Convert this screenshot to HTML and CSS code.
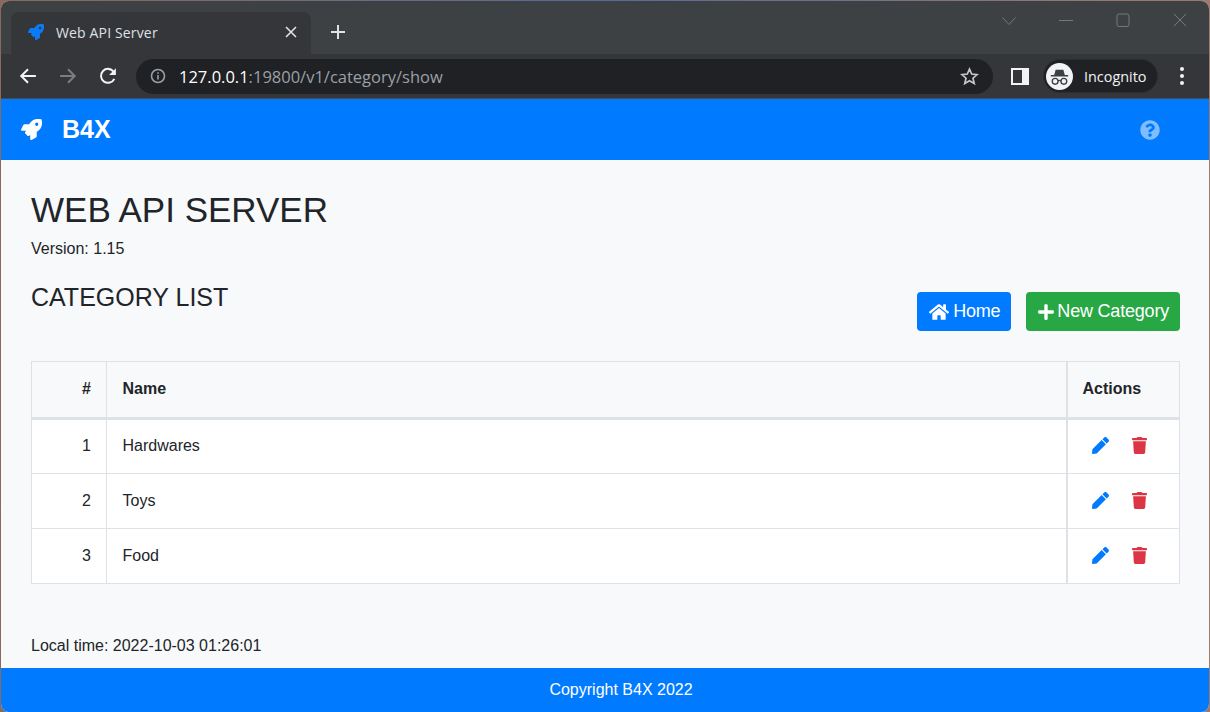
FILE: index.html
```html
<!DOCTYPE html>
<html>
	<head>
		<meta charset="utf-8">
		<title>Web API Server</title>
		<link rel="stylesheet" href="styles.css">
	</head>
	<body>
		<div class="window">
			<div class="tabstrip">
				<div class="tab">
					<svg class="tab-icon" viewBox="0 0 512 512"><path d="M505.12 19.09c-1.19-5.53-6.66-11-12.21-12.19C460.72 0 435.51 0 410.41 0 307.18 0 245.27 55.2 199.05 128H94.84c-16.35.02-35.56 11.88-42.89 26.48L2.52 253.3A28.4 28.4 0 0 0 0 264a24 24 0 0 0 24 24h103.81l-22.47 22.47c-11.37 11.36-13 32.26 0 45.25l50.9 50.91c11.16 11.19 32.16 13.16 45.28 0l22.47-22.47V488a24 24 0 0 0 24 24 28.56 28.56 0 0 0 10.71-2.52l98.73-49.39c14.63-7.3 26.51-26.5 26.51-42.86V312.8c72.6-46.31 128.03-108.41 128.03-211.1.02-25.2.02-50.4-6.93-82.61zM384.04 168a40 40 0 1 1 40.01-40 40 40 0 0 1-40.01 40z"/></svg>
					<span class="tab-title">Web API Server</span>
					<svg class="tab-close" viewBox="0 0 12 12"><path d="M1 1l10 10M11 1L1 11"/></svg>
				</div>
				<svg class="new-tab" viewBox="0 0 16 16"><path d="M8 1v14M1 8h14"/></svg>
				<div class="win-btns">
					<svg viewBox="0 0 14 14"><path d="M.5 4.500l6.500 7 6.500-7"/></svg>
					<svg viewBox="0 0 14 14"><path d="M0 7.500h14"/></svg>
					<svg viewBox="0 0 14 14"><rect x="1" y="1" width="12" height="12.500" rx="2"/></svg>
					<svg viewBox="0 0 14 14"><path d="M1 1l12 12M13 1L1 13"/></svg>
				</div>
			</div>
			<div class="toolbar">
				<svg class="tool-icon" viewBox="0 0 16 16"><path d="M15 8H2M8 2L2 8l6 6"/></svg>
				<svg class="tool-icon dim" viewBox="0 0 16 16"><path d="M1 8h13M8 2l6 6-6 6"/></svg>
				<svg class="tool-icon reload" viewBox="0 0 16 16"><path d="M13.6 10.5A6.2 6.2 0 1 1 13 4.2"/><path class="fill" d="M15 1v6H9z"/></svg>
				<div class="omnibox">
					<svg class="info" viewBox="0 0 16 16"><circle cx="8" cy="8" r="6.5"/><path d="M8 7v4.5M8 4.2v1.6"/></svg>
					<span class="url"><b>127.0.0.1</b>:19800/v1/category/show</span>
					<svg class="star" viewBox="0 0 18 18"><path d="M9 2l2.1 4.7 5.1.5-3.9 3.4 1.2 5L9 13l-4.5 2.6 1.2-5-3.9-3.4 5.1-.5z"/></svg>
				</div>
				<svg class="side-panel" viewBox="0 0 18 17"><path fill-rule="evenodd" d="M0 0h18v17H0zM2 2v13h9V2z"/></svg>
				<div class="profile">
					<span class="avatar">
						<svg viewBox="0 0 28 28"><path class="hat" d="M10 7h8l1.5 5.5H23V14H5v-1.5h3.500z"/><circle cx="9.500" cy="19" r="3"/><circle cx="18.500" cy="19" r="3"/><path d="M12.500 18.500c1-.7 2-.7 3 0"/></svg>
					</span>
					<span class="profile-name">Incognito</span>
				</div>
				<div class="dots"><i></i><i></i><i></i></div>
			</div>
			<nav class="navbar">
				<svg class="brand-icon" viewBox="0 0 512 512"><path d="M505.12 19.09c-1.19-5.53-6.66-11-12.21-12.19C460.72 0 435.51 0 410.41 0 307.18 0 245.27 55.2 199.05 128H94.84c-16.35.02-35.56 11.88-42.89 26.48L2.52 253.3A28.4 28.4 0 0 0 0 264a24 24 0 0 0 24 24h103.81l-22.47 22.47c-11.37 11.36-13 32.26 0 45.25l50.9 50.91c11.16 11.19 32.16 13.16 45.28 0l22.47-22.47V488a24 24 0 0 0 24 24 28.56 28.56 0 0 0 10.71-2.52l98.73-49.39c14.63-7.3 26.51-26.5 26.51-42.86V312.8c72.6-46.31 128.03-108.41 128.03-211.1.02-25.2.02-50.4-6.93-82.61zM384.04 168a40 40 0 1 1 40.01-40 40 40 0 0 1-40.01 40z"/></svg>
				<span class="brand">B4X</span>
				<svg class="help" viewBox="0 0 512 512"><path d="M504 256c0 136.997-111.043 248-248 248S8 392.997 8 256C8 119.083 119.043 8 256 8s248 111.083 248 248zM262.655 90c-54.497 0-89.255 22.957-116.549 63.758-3.536 5.286-2.353 12.415 2.715 16.258l34.699 26.31c5.205 3.947 12.621 3.008 16.665-2.122 17.864-22.658 30.113-35.797 57.303-35.797 20.429 0 45.698 13.148 45.698 32.958 0 14.976-12.363 22.667-32.534 33.976C247.128 238.528 216 254.941 216 296v4c0 6.627 5.373 12 12 12h56c6.627 0 12-5.373 12-12v-1.333c0-28.462 83.186-29.647 83.186-106.667 0-58.002-60.165-102-116.531-102zM256 338c-25.365 0-46 20.635-46 46 0 25.364 20.635 46 46 46s46-20.636 46-46c0-25.365-20.635-46-46-46z"/></svg>
			</nav>
			<main class="content">
				<h1>WEB API SERVER</h1>
				<p class="version">Version: 1.15</p>
				<div class="list-head">
					<h2>CATEGORY LIST</h2>
					<div class="actions">
						<a class="btn btn-blue">
							<svg class="btn-home" viewBox="0 0 576 512"><path d="M280.37 148.26L96 300.11V464a16 16 0 0 0 16 16l112.06-.29a16 16 0 0 0 15.92-16V368a16 16 0 0 1 16-16h64a16 16 0 0 1 16 16v95.64a16 16 0 0 0 16 16.05L464 480a16 16 0 0 0 16-16V300L295.67 148.26a12.19 12.19 0 0 0-15.3 0zM571.6 251.47L488 182.56V44.05a12 12 0 0 0-12-12h-56a12 12 0 0 0-12 12v72.61L318.47 43a48 48 0 0 0-61 0L4.34 251.47a12 12 0 0 0-1.6 16.9l25.5 31A12 12 0 0 0 45.15 301l235.22-193.74a12.19 12.19 0 0 1 15.3 0L530.9 301a12 12 0 0 0 16.9-1.6l25.5-31a12 12 0 0 0-1.7-16.93z"/></svg>
							Home
						</a>
						<a class="btn btn-green">
							<svg class="btn-plus" viewBox="0 0 448 512"><path d="M416 208H272V64c0-17.67-14.33-32-32-32h-32c-17.67 0-32 14.33-32 32v144H32c-17.67 0-32 14.33-32 32v32c0 17.67 14.33 32 32 32h144v144c0 17.67 14.33 32 32 32h32c17.67 0 32-14.33 32-32V304h144c17.67 0 32-14.33 32-32v-32c0-17.67-14.33-32-32-32z"/></svg>
							New Category
						</a>
					</div>
				</div>
				<table class="list">
					<thead>
						<tr><th class="col-num">#</th><th>Name</th><th class="col-act">Actions</th></tr>
					</thead>
					<tbody>
						<tr>
							<td class="col-num">1</td><td>Hardwares</td>
							<td class="col-act"><span class="row-actions"><svg class="ico-edit" viewBox="0 0 512 512"><path d="M290.74 93.24l128.02 128.02-277.99 277.99-114.14 12.6C11.35 513.54-1.56 500.62.14 485.34l12.7-114.22 277.9-277.88zm207.2-19.06l-60.11-60.11c-18.75-18.75-49.16-18.75-67.91 0l-56.55 56.55 128.02 128.02 56.55-56.55c18.75-18.76 18.75-49.16 0-67.91z"/></svg><svg class="ico-del" viewBox="0 0 448 512"><path d="M432 32H312l-9.4-18.7A24 24 0 0 0 281.1 0H166.8a23.72 23.72 0 0 0-21.4 13.3L136 32H16A16 16 0 0 0 0 48v32a16 16 0 0 0 16 16h416a16 16 0 0 0 16-16V48a16 16 0 0 0-16-16zM53.2 467a48 48 0 0 0 47.9 45h245.8a48 48 0 0 0 47.9-45L416 128H32z"/></svg></span></td>
						</tr>
						<tr>
							<td class="col-num">2</td><td>Toys</td>
							<td class="col-act"><span class="row-actions"><svg class="ico-edit" viewBox="0 0 512 512"><path d="M290.74 93.24l128.02 128.02-277.99 277.99-114.14 12.6C11.35 513.54-1.56 500.62.14 485.34l12.7-114.22 277.9-277.88zm207.2-19.06l-60.11-60.11c-18.75-18.75-49.16-18.75-67.91 0l-56.55 56.55 128.02 128.02 56.55-56.55c18.75-18.76 18.75-49.16 0-67.91z"/></svg><svg class="ico-del" viewBox="0 0 448 512"><path d="M432 32H312l-9.4-18.7A24 24 0 0 0 281.1 0H166.8a23.72 23.72 0 0 0-21.4 13.3L136 32H16A16 16 0 0 0 0 48v32a16 16 0 0 0 16 16h416a16 16 0 0 0 16-16V48a16 16 0 0 0-16-16zM53.2 467a48 48 0 0 0 47.9 45h245.8a48 48 0 0 0 47.9-45L416 128H32z"/></svg></span></td>
						</tr>
						<tr>
							<td class="col-num">3</td><td>Food</td>
							<td class="col-act"><span class="row-actions"><svg class="ico-edit" viewBox="0 0 512 512"><path d="M290.74 93.24l128.02 128.02-277.99 277.99-114.14 12.6C11.35 513.54-1.56 500.62.14 485.34l12.7-114.22 277.9-277.88zm207.2-19.06l-60.11-60.11c-18.75-18.75-49.16-18.75-67.91 0l-56.55 56.55 128.02 128.02 56.55-56.55c18.75-18.76 18.75-49.16 0-67.91z"/></svg><svg class="ico-del" viewBox="0 0 448 512"><path d="M432 32H312l-9.4-18.7A24 24 0 0 0 281.1 0H166.8a23.72 23.72 0 0 0-21.4 13.3L136 32H16A16 16 0 0 0 0 48v32a16 16 0 0 0 16 16h416a16 16 0 0 0 16-16V48a16 16 0 0 0-16-16zM53.2 467a48 48 0 0 0 47.9 45h245.8a48 48 0 0 0 47.9-45L416 128H32z"/></svg></span></td>
						</tr>
					</tbody>
				</table>
				<p class="local-time">Local time: 2022-10-03 01:26:01</p>
			</main>
			<footer class="footer">Copyright B4X 2022</footer>
		</div>
	</body>
</html>
```

FILE: styles.css
```css
html, body{
	margin: 0;
	height: 100%;
}
body{
	background: linear-gradient(90deg, #8a6a58 0%, #5a6a98 50%, #a07a6a 100%);
	font-family: "Liberation Sans", Arial, sans-serif;
	font-size: 16px;
	color: #212529;
	overflow: hidden;
}
.window{
	margin: 1px 1px 0;
	height: 711px;
	border-radius: 8px;
	overflow: hidden;
	display: flex;
	flex-direction: column;
	background: #f8f9fa;
}

/* browser frame */
.tabstrip{
	height: 53px;
	flex: none;
	background: #3e4144;
	display: flex;
	align-items: flex-end;
	padding-left: 10px;
	box-sizing: border-box;
}
.tab{
	width: 300px;
	height: 42px;
	background: #35363a;
	border-radius: 8px 8px 0 0;
	display: flex;
	align-items: center;
	padding: 0 14px 2px 17px;
	box-sizing: border-box;
	color: #dee1e6;
	font-family: "Open Sans", sans-serif;
	font-size: 14px;
	letter-spacing: 0.15px;
}
.tab-icon{
	width: 16px;
	height: 16px;
	fill: #0a7bf5;
	margin-right: 12px;
}
.tab-title{
	flex: 1;
}
.tab-close{
	width: 12px;
	height: 12px;
	fill: none;
	stroke: #dee1e6;
	stroke-width: 1.6;
}
.new-tab{
	width: 16px;
	height: 16px;
	fill: none;
	stroke: #dee1e6;
	stroke-width: 2;
	margin: 0 0 14px 19px;
}
.win-btns{
	margin-left: auto;
	align-self: flex-start;
	display: flex;
	gap: 43px;
	padding: 12px 22px 0 0;
}
.win-btns svg{
	width: 14px;
	height: 14px;
	fill: none;
	stroke: #75787b;
	stroke-width: 1;
}
.toolbar{
	height: 45px;
	flex: none;
	background: #35363a;
	border-bottom: 1px solid #4a4c50;
	box-sizing: border-box;
	display: flex;
	align-items: center;
	padding-left: 18px;
}
.tool-icon{
	width: 18px;
	height: 18px;
	fill: none;
	stroke: #f1f3f4;
	stroke-width: 1.8;
	margin-right: 22px;
}
.tool-icon.reload{
	margin-right: 19px;
}
.tool-icon.dim{
	stroke: #7b7d80;
}
.tool-icon .fill{
	fill: #f1f3f4;
	stroke: none;
}
.omnibox{
	width: 857px;
	height: 35px;
	background: #202124;
	border-radius: 18px;
	display: flex;
	align-items: center;
	padding: 0 14px;
	box-sizing: border-box;
	font-family: "Open Sans", sans-serif;
	font-size: 16.5px;
	color: #9aa0a6;
}
.info{
	width: 16px;
	height: 16px;
	fill: none;
	stroke: #9aa0a6;
	stroke-width: 1.6;
	margin-right: 13px;
}
.url{
	flex: 1;
}
.url b{
	font-weight: 400;
	color: #fff;
}
.star{
	width: 19px;
	height: 19px;
	fill: none;
	stroke: #c4c7ca;
	stroke-width: 1.6;
}
.side-panel{
	width: 18px;
	height: 17px;
	fill: #f1f3f4;
	margin: 0 14px 0 18px;
}
.profile{
	width: 115px;
	height: 34px;
	background: #202124;
	border: 1px solid #2c2d30;
	border-radius: 17px;
	box-sizing: border-box;
	display: flex;
	align-items: center;
	padding-left: 2px;
	color: #f1f3f4;
	font-family: "Open Sans", sans-serif;
	font-size: 14.4px;
}
.avatar{
	width: 27px;
	height: 27px;
	border-radius: 50%;
	background: #f1f3f4;
	margin-right: 11px;
	flex: none;
}
.avatar svg{
	display: block;
	width: 27px;
	height: 27px;
	fill: none;
	stroke: #3c4043;
	stroke-width: 1.4;
}
.avatar .hat{
	fill: #3c4043;
	stroke: none;
}
.dots{
	display: flex;
	flex-direction: column;
	gap: 3px;
	margin-left: 22px;
}
.dots i{
	width: 4px;
	height: 4px;
	border-radius: 50%;
	background: #f1f3f4;
}

/* page */
.navbar{
	height: 61px;
	flex: none;
	background: #007bff;
	display: flex;
	align-items: center;
	padding: 0 49px 0 20px;
}
.brand-icon{
	width: 21px;
	height: 21px;
	fill: #fff;
	margin-right: 20px;
}
.brand{
	font-weight: bold;
	font-size: 25px;
	color: #fff;
}
.help{
	width: 20px;
	height: 20px;
	fill: rgba(255, 255, 255, 0.5);
	margin-left: auto;
}
.content{
	flex: 1;
	padding: 29px 29px 0 30px;
}
h1{
	margin: 0;
	font-size: 35px;
	font-weight: 400;
	line-height: 41px;
}
.version{
	margin: 7px 0 0;
	line-height: 24px;
}
.list-head{
	display: flex;
	justify-content: space-between;
	margin-top: 22px;
}
h2{
	margin: 0;
	font-size: 25px;
	font-weight: 400;
	line-height: 29px;
}
.actions{
	display: flex;
	gap: 15px;
	margin-top: 9px;
}
.btn{
	height: 39px;
	display: flex;
	align-items: center;
	gap: 4px;
	padding: 0 11px 0 12px;
	border-radius: 4px;
	box-sizing: border-box;
	color: #fff;
	font-size: 18px;
	letter-spacing: -0.2px;
}
.btn svg{
	fill: #fff;
	height: 18px;
}
.btn-home{
	width: 20px;
}
.btn-plus{
	width: 16px;
}
.btn-blue{
	background: #007bff;
}
.btn-green{
	background: #28a745;
	gap: 3px;
}
.list{
	width: 1149px;
	margin-top: 30px;
	border-collapse: collapse;
	table-layout: fixed;
}
.list th, .list td{
	border: 1px solid #dee2e6;
	padding: 0 15px 1px 15.5px;
	text-align: left;
	height: 55px;
	box-sizing: border-box;
}
.list td{
	background: #fff;
}
.list tbody tr:first-child td{
	padding-bottom: 2px;
}
.list th{
	height: 57px;
	padding-bottom: 2px;
	border-bottom-width: 3px;
	background: #f8f9fa;
}
.list .col-num{
	width: 75px;
	text-align: right;
}
.list .col-act{
	width: 113px;
	padding-left: 15px;
	border-left-width: 2px;
}
.row-actions{
	display: flex;
	align-items: center;
	padding-left: 9.5px;
	gap: 23px;
}
.ico-edit{
	width: 17px;
	height: 17px;
	fill: #007bff;
}
.ico-del{
	width: 15px;
	height: 17px;
	fill: #dc3545;
}
.local-time{
	margin: 50px 0 0;
	line-height: 24px;
}
.footer{
	height: 44px;
	flex: none;
	padding-left: 32px;
	background: #007bff;
	color: #fff;
	display: flex;
	align-items: center;
	justify-content: center;
}
```
